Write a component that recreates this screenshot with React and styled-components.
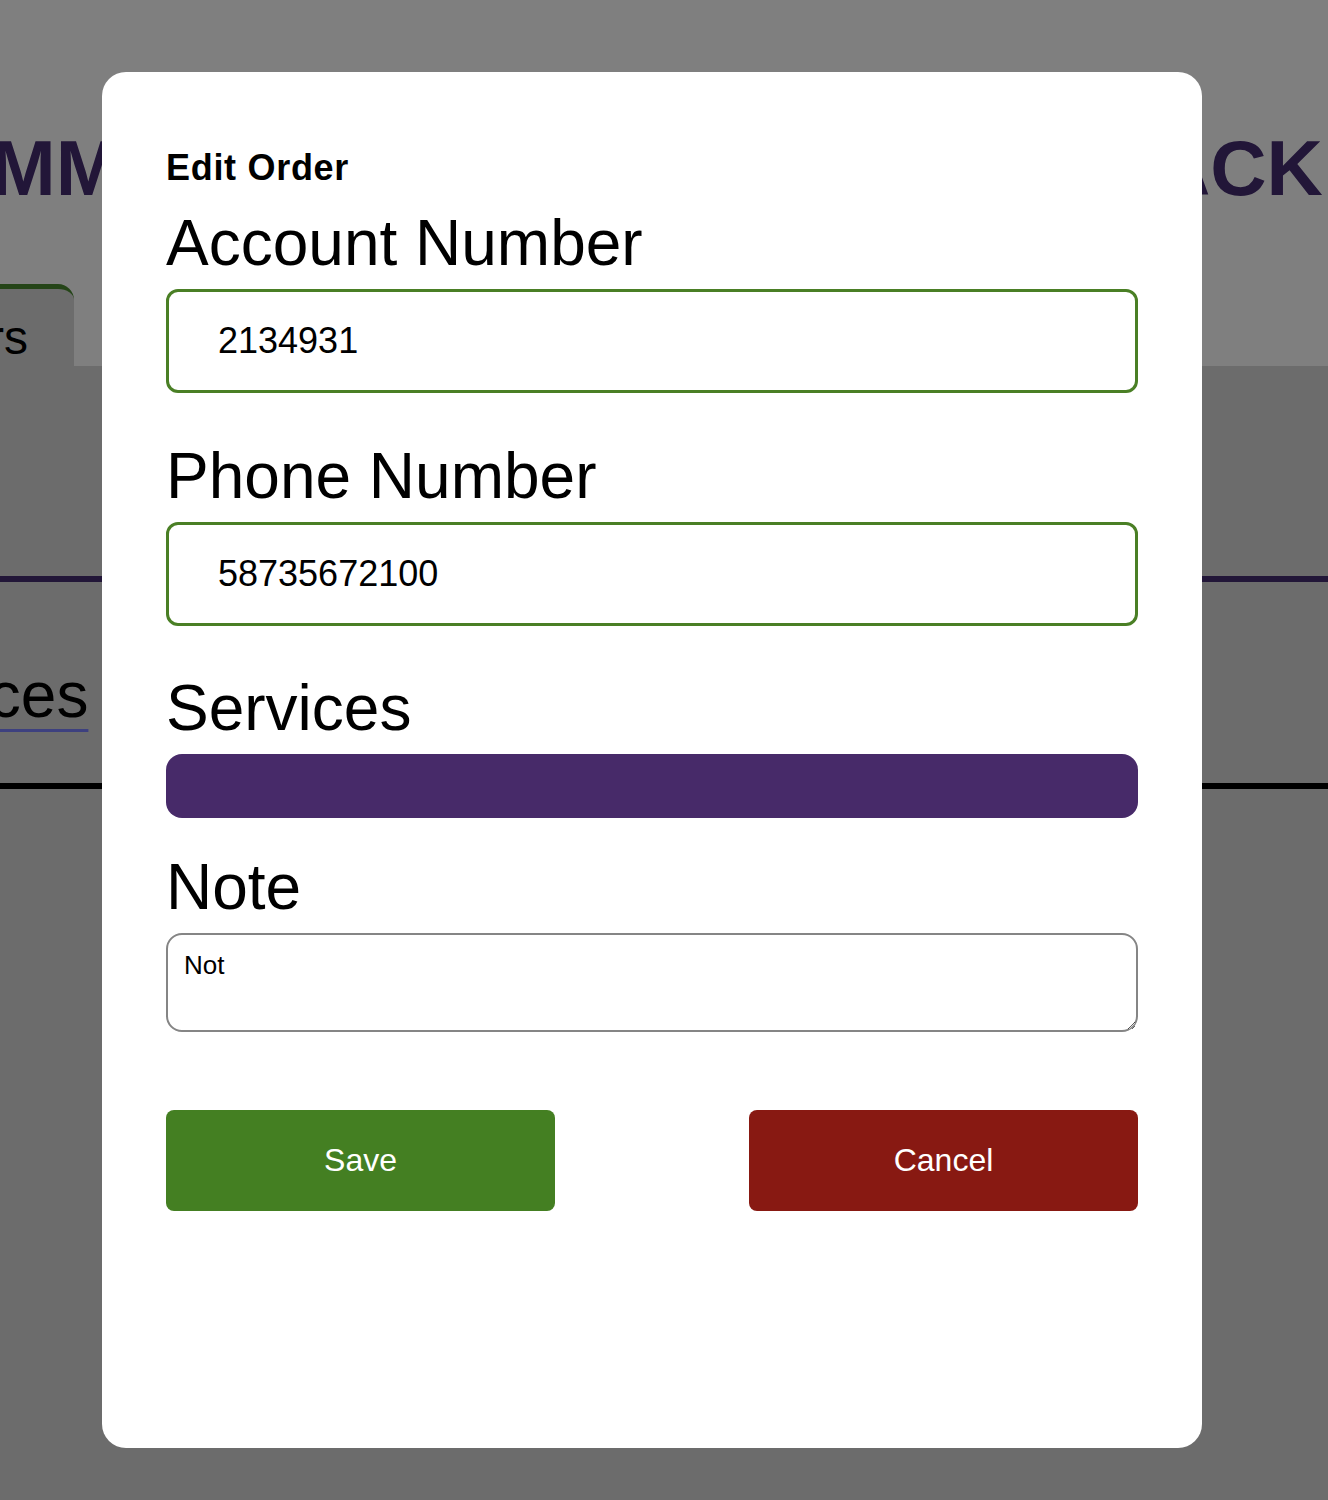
import React from "react";
import styled, { createGlobalStyle } from "styled-components";

const Global = createGlobalStyle`
  html, body { margin: 0; padding: 0; }
  body {
    font-family: "Liberation Sans", Arial, Helvetica, sans-serif;
    background: #d9d9d9;
    overflow: hidden;
  }
  * { box-sizing: border-box; }
`;

const Page = styled.div`
  width: 1328px;
  height: 1500px;
  background: #d9d9d9;
  overflow: hidden;
`;

const Header = styled.header`
  height: 366px;
  background: #ffffff;
  display: flex;
  flex-direction: column;
  justify-content: space-between;
  overflow: hidden;
`;

const TitleRow = styled.div`
  display: flex;
  justify-content: center;
  padding-right: 23px;
  margin-top: 122px;
`;

const Title = styled.h1`
  margin: 0;
  flex-shrink: 0;
  white-space: nowrap;
  font-size: 78px;
  line-height: 92px;
  font-weight: 700;
  word-spacing: 3px;
  color: #442c70;
`;

const TabBar = styled.nav`
  display: flex;
  align-items: flex-end;
`;

const Tab = styled.div`
  width: 200px;
  margin-left: -126px;
  height: 82px;
  overflow: hidden;
  background: #d9d9d9;
  border-top: 5px solid #4a8a30;
  border-top-right-radius: 16px;
  font-size: 48px;
  line-height: 72px;
  padding-top: 13px;
  text-align: right;
  padding-right: 46px;
  color: #000;
`;

const Content = styled.main`
  display: flex;
  flex-direction: column;
`;

const PurpleRule = styled.div`
  margin-top: 210px;
  height: 6px;
  background: #442c70;
`;

const SectionLink = styled.a`
  margin: 76px 0 0 -157px;
  font-size: 64px;
  line-height: 74px;
  color: #000;
  text-decoration: underline;
  text-decoration-color: #7a80ff;
  text-decoration-thickness: 3px;
  text-underline-offset: 12px;
`;

const BlackRule = styled.div`
  margin-top: 51px;
  height: 6px;
  background: #000;
`;

const Overlay = styled.div`
  position: fixed;
  inset: 0;
  background: rgba(0, 0, 0, 0.5);
  display: flex;
  align-items: flex-start;
  padding: 72px 0 0 102px;
`;

const Modal = styled.div`
  width: 1100px;
  height: 1376px;
  background: #ffffff;
  border-radius: 24px;
  padding: 76px 64px 0;
  display: flex;
  flex-direction: column;
`;

const ModalTitle = styled.h2`
  margin: 0;
  font-size: 36px;
  line-height: 40px;
  letter-spacing: 0.7px;
  font-weight: 700;
  color: #000;
`;

const Label = styled.label`
  display: block;
  margin-top: ${(p) => p.$gap}px;
  padding-top: 4px;
  font-size: 64px;
  line-height: 74px;
  font-weight: 400;
  color: #000;
`;

const TextInput = styled.input`
  display: block;
  margin-top: 9px;
  width: 100%;
  height: 104px;
  border: 3px solid #4a7f25;
  border-radius: 12px;
  padding: 0 0 0 49px;
  font-family: "Liberation Sans", Arial, sans-serif;
  font-size: 36px;
  color: #000;
  background: #fff;
  outline: none;
`;

const ServicesBar = styled.div`
  margin-top: 9px;
  width: 100%;
  height: 64px;
  border-radius: 16px;
  background: #472a69;
`;

const NoteArea = styled.textarea`
  display: block;
  margin-top: 9px;
  width: 100%;
  height: 99px;
  border: 2px solid #858585;
  border-radius: 16px;
  padding: 15px 16px 14px;
  font-family: "Liberation Sans", Arial, sans-serif;
  font-size: 26px;
  line-height: 30px;
  color: #000;
  resize: vertical;
  outline: none;
`;

const Actions = styled.div`
  margin-top: 78px;
  display: flex;
  justify-content: space-between;
`;

const ActionButton = styled.button`
  width: 389px;
  height: 101px;
  border: none;
  border-radius: 8px;
  background: ${(p) => p.$bg};
  color: #ffffff;
  font-family: "Liberation Sans", Arial, sans-serif;
  font-size: 32px;
  cursor: pointer;
`;

export default function App() {
  return (
    <>
      <Global />
      <Page>
        <Header>
          <TitleRow>
            <Title>COMMUNITY SERVICE ORDER TRACKER</Title>
          </TitleRow>
          <TabBar>
            <Tab>Orders</Tab>
          </TabBar>
        </Header>
        <Content>
          <PurpleRule />
          <SectionLink href="#services">Services</SectionLink>
          <BlackRule />
        </Content>
      </Page>
      <Overlay>
        <Modal>
          <ModalTitle>Edit Order</ModalTitle>
          <Label $gap={14} htmlFor="acct">Account Number</Label>
          <TextInput id="acct" defaultValue="2134931" />
          <Label $gap={42} htmlFor="phone">Phone Number</Label>
          <TextInput id="phone" defaultValue="58735672100" />
          <Label $gap={41}>Services</Label>
          <ServicesBar />
          <Label $gap={28} htmlFor="note">Note</Label>
          <NoteArea id="note" defaultValue="Not" />
          <Actions>
            <ActionButton $bg="#447f22">Save</ActionButton>
            <ActionButton $bg="#881912">Cancel</ActionButton>
          </Actions>
        </Modal>
      </Overlay>
    </>
  );
}
